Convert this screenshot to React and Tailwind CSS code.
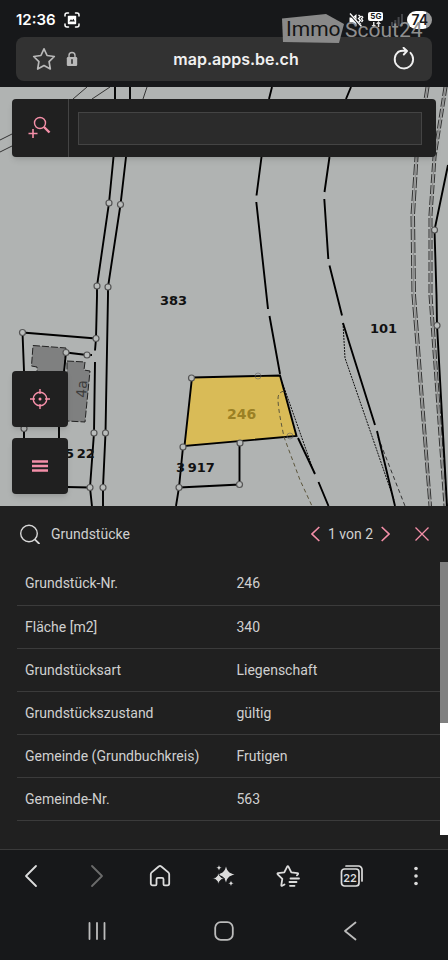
const rows = [
  ['Grundstück-Nr.', '246'],
  ['Fläche [m2]', '340'],
  ['Grundstücksart', 'Liegenschaft'],
  ['Grundstückszustand', 'gültig'],
  ['Gemeinde (Grundbuchkreis)', 'Frutigen'],
  ['Gemeinde-Nr.', '563'],
];

const boundaryPoints = [
  [109, 203], [120.5, 204.5], [97, 286], [108, 287], [22.5, 332.5], [96, 338.5],
  [66, 352.5], [87, 355], [24, 428.5], [94, 433], [105.5, 433], [90, 487.5],
  [103, 487.5], [179, 487.5], [239.5, 484.5], [434.5, 230], [437, 325.5],
  [183, 447], [240, 443], [191.5, 378],
];

function StatusBar() {
  return (
    <div className="flex h-9 items-center px-4 pt-1 text-white">
      <span className="text-[15px] font-semibold leading-5">12:36</span>
      <svg className="ml-2 size-4" viewBox="0 0 16 16" fill="none" stroke="#fff" strokeWidth="1.5" strokeLinecap="round">
        <path d="M1 4V3a2 2 0 0 1 2-2h1.5M11.500 1H13a2 2 0 0 1 2 2v1M15 12v1a2 2 0 0 1-2 2h-1.500M4.500 15H3a2 2 0 0 1-2-2v-1" />
        <path d="M4.500 3.800h7a.7.7 0 0 1 .7.7v7a.7.7 0 0 1-.7.7h-7a.7.7 0 0 1-.7-.7v-7a.7.7 0 0 1 .7-.7Z" fill="#fff" stroke="none" />
        <path d="M5.200 9.600 7 7.200l1.200 1.200 1.200-1.600 1.500 2.800z" fill="#17181a" stroke="none" />
      </svg>
      <div className="ml-auto flex items-center">
        <svg className="size-4" viewBox="0 0 16 16" fill="none" stroke="#fff" strokeWidth="1.300">
          <path d="M1.500 5.500h3l4-3.500v12l-4-3.500h-3z" fill="#fff" stroke="none" />
          <path d="m10.500 3 2 1.800-2 1.800 2 1.800-2 1.800 2 1.800-1.500 1.500M13.500 4l1.200 1.200-1.200 1.600 1.200 1.600-1.200 1.600" />
          <path d="M1.500 1.500 13 14.500" stroke="#17181a" strokeWidth="2.400" />
          <path d="M2 1.500 13.500 14.500" />
        </svg>
        <div className="ml-1 flex flex-col items-center">
          <span className="rounded-[2px] bg-white px-[2px] text-[8px] font-bold leading-[9px] text-[#17181a]">5G</span>
          <svg className="h-[7px] w-3" viewBox="0 0 12 7" fill="#ddd">
            <path d="M3 1h1.500v3H6L3.700 6.500 1.500 4H3zM8.500 0 11 3H9.300v3H7.800V3H6z" />
          </svg>
        </div>
        <svg className="ml-2 size-3" viewBox="0 0 12 12" fill="#45464a">
          <path d="M0 8h2v4H0zM3.300 6h2v6h-2zM6.600 3h2v9h-2zM10 0h2v12h-2z" />
        </svg>
        <span className="ml-1 rounded-full bg-linear-to-r from-white from-75% to-[#9a9a9a] to-75% px-1 text-[14px] font-semibold leading-[18px] text-[#17181a]">74</span>
      </div>
    </div>
  );
}

function Watermark() {
  return (
    <svg className="pointer-events-none absolute right-5 top-3 h-8 w-[148px]" viewBox="280 12 148 32" aria-hidden="true">
      <path d="m282 18.500 44-4.500 18 10-5 19-56-1z" fill="#8f8f8f" fillOpacity="0.950" />
      <text x="286" y="36" fontSize="21" fontFamily="Roboto, sans-serif" fill="#151515">Immo</text>
      <text x="345" y="37" fontSize="21" fontFamily="Roboto, sans-serif" fill="#8f8f8f">Scout24</text>
    </svg>
  );
}

function AddressBar() {
  return (
    <div className="mx-4 mt-px flex h-11 items-center rounded-lg bg-[#323232] px-4">
      <button aria-label="Lesezeichen">
        <svg className="size-6" viewBox="0 0 24 24" fill="none" stroke="#b9b9b9" strokeWidth="1.700" strokeLinejoin="round">
          <path d="m12 1.800 3.100 6.700 7.200 1-5.200 5.100 1.200 7.400-6.300-3.400L5.700 22l1.200-7.400L1.700 9.500l7.200-1z" />
        </svg>
      </button>
      <svg className="ml-2 h-4 w-4" viewBox="0 0 16 16">
        <path d="M5 8V4.500a3 3 0 0 1 6 0V8" fill="none" stroke="#b9b9b9" strokeWidth="1.400" />
        <rect x="2.800" y="6" width="10.400" height="9" rx="1.200" fill="#b9b9b9" />
        <path d="M8 8.800v3.500" stroke="#323232" strokeWidth="1.600" strokeLinecap="round" />
      </svg>
      <span className="flex-1 text-center text-[16px] font-semibold leading-6 text-[#f0f0f0]">map.apps.be.ch</span>
      <button aria-label="Neu laden">
        <svg className="size-6" viewBox="0 0 24 24" fill="none" stroke="#f0f0f0" strokeWidth="1.900" strokeLinecap="round" strokeLinejoin="round">
          <path d="M6.500 4.800A9.200 9.200 0 1 0 18.500 5.800" />
          <path d="M6.500 4.800c2-1.300 5-1.300 8-.8M11.500.8 15 4l-3.200 3.500" />
        </svg>
      </button>
    </div>
  );
}

function ParcelMap() {
  return (
    <svg className="block w-full" viewBox="0 87 448 419" fill="none" role="img" aria-label="Grundstückskarte">
      <rect y="87" width="448" height="419" fill="#b0b3b2" />
      <g fill="#7f8080" stroke="#222" strokeDasharray="7 2">
        <path d="m33 345.500 33 2.500-2 25H37v-6l-5.500-1z" />
        <path d="m67 361 18 1-1 8 6 1-5 51-18-1z" />
      </g>
      <g stroke="#333">
        <path d="M87 87 73 99M110 87 92 99M147 87l-4 12M0 140l12-6M0 152l12-6" />
        <path d="m280 376 35 99M343 323l2 35 49 142" stroke="#111" strokeDasharray="2 1" />
        <path d="m378 437 27 69" strokeDasharray="4 3" />
        <path d="M426 87 415 157l-4 58 1 80 17 211M429 87l-11 70-3.500 58 1 80 16 211" strokeDasharray="11 2" />
        <path d="M427.500 87l-11 70-3.700 58 1 80 16.500 211M445.500 87l-11 70-4 58v80l15 211" stroke="#888" />
        <path d="m444 87-11 70-4 58v80l15 211M447 87l-11 70-4 58v80l15 211" strokeDasharray="9 2" />
      </g>
      <g stroke="#000" strokeWidth="1.900">
        <path d="M115 87v12M113.500 157l-4.500 46-12 83v10l-1 42.500-1 12M95 362l-1 71-4 54.500 2 19" />
        <path d="M130 87v12M126 157l-5.500 47.500L108 287v8l-2.500 138-2.500 54.500V506" />
        <path d="m22.500 332.500 73.500 6M22.500 332.500 24 371v70M59 425v15M66 352.500 64 372M66 352.500l21 2.500h5M66 487l24 .5" />
        <path d="m272 87-3 12M261.500 157l-5 38.500M256.300 202 268 309M269.500 316l10.500 58M298 438l17 36M318.500 482l10 24" />
        <path d="m351 87-5 12M329.500 157l-5 35M324.300 199l4 60M329.500 265.500l12.500 50M343 323l32 102M377 431l18 75" />
        <path d="m448 165-13.500 65 2 65 .5 30 10 181" />
        <path d="m183 447-4 40.500-3 18.500M179 487.500l60.500-3V443" />
      </g>
      <path d="m192 377.500 88-2 16.500 60.500-112 10z" fill="#d9bb57" stroke="#000" strokeWidth="1.900" />
      <path d="M284 391c-4 1-6 3-6 8 0 10 4 28 6 38l16 43 12 26" stroke="#5c563c" strokeDasharray="4 3" />
      <g stroke="#666" strokeOpacity="0.600">
        <circle cx="258" cy="376" r="3" />
        <circle cx="290" cy="436" r="3" />
      </g>
      <g fill="#b9bcbb" stroke="#555" strokeWidth="1.200">
        {boundaryPoints.map(([x, y]) => (
          <circle key={`${x}-${y}`} cx={x} cy={y} r="3" />
        ))}
      </g>
      <g fill="#111" fontFamily="'DejaVu Sans', sans-serif" fontSize="13" fontWeight="700">
        <text x="160" y="305">383</text>
        <text x="370" y="333">101</text>
        <text x="65" y="458">5{'\u2009'}22</text>
        <text x="176" y="472">3{'\u2009'}917</text>
        <text x="227" y="419" fontSize="14" fill="#9b8024">246</text>
      </g>
      <text transform="translate(86 398) rotate(-86)" fontFamily="'DejaVu Sans', sans-serif" fontSize="14" fill="#3d3d3d">4a</text>
    </svg>
  );
}

function MapControls() {
  return (
    <div className="absolute inset-0 flex flex-col p-3">
      <div className="flex h-[58px] rounded-sm bg-[#202020] shadow-md">
        <button aria-label="Suche erweitern" className="flex w-14 items-center justify-center">
          <svg className="size-6" viewBox="0 0 24 24" fill="none" stroke="#f48fa8">
            <circle cx="12" cy="7" r="5.500" strokeWidth="1.400" />
            <path d="m16 11 5.500 5.500" strokeWidth="2.400" />
            <path d="M5 13v9M.5 17.500h9" strokeWidth="1.600" />
          </svg>
        </button>
        <div className="flex flex-1 items-center border-l border-[#444] pl-[9px] pr-[14px]">
          <input aria-label="Suche" className="h-[33px] w-full border border-[#444] bg-[#2b2b2b] px-2 text-sm text-[#d0d0d0] outline-none" />
        </div>
      </div>
      <div className="mt-auto flex flex-col gap-[11px]">
        <button aria-label="Standort" className="flex size-14 items-center justify-center rounded-sm bg-[#202020] shadow-md">
          <svg className="size-5" viewBox="0 0 20 20" fill="none" stroke="#f48fa8" strokeWidth="1.400">
            <circle cx="10" cy="10" r="6.800" />
            <circle cx="10" cy="10" r="1.500" fill="#f48fa8" stroke="none" />
            <path d="M10 0v5M10 15v5M0 10h5M15 10h5" />
          </svg>
        </button>
        <button aria-label="Menü" className="flex size-14 items-center justify-center rounded-sm bg-[#202020] shadow-md">
          <svg className="h-3 w-4" viewBox="0 0 16 12" stroke="#f48fa8" strokeWidth="2.400">
            <path d="M0 1.500h16M0 6h16M0 10.500h16" />
          </svg>
        </button>
      </div>
    </div>
  );
}

function ParcelPanel() {
  return (
    <section className="bg-[#202020] text-[14px] text-[#d0d0d0] [font-family:Roboto,sans-serif]">
      <header className="flex h-14 items-center pl-5 pr-[18px]">
        <svg className="size-5" viewBox="0 0 20 20" fill="none" stroke="#d8d8d8" strokeWidth="1.400">
          <circle cx="9" cy="9.500" r="8.300" />
          <path d="m14.800 15.300 4.700 4.700" strokeWidth="1.800" />
        </svg>
        <h1 className="ml-[11px] leading-5">Grundstücke</h1>
        <div className="ml-auto flex items-center gap-2">
          <button aria-label="Zurück">
            <svg className="h-4 w-[9px]" viewBox="0 0 9 16" fill="none" stroke="#f48fa8" strokeWidth="1.600">
              <path d="M8.300 1 1 8l7.300 7" />
            </svg>
          </button>
          <span className="leading-5">1 von 2</span>
          <button aria-label="Weiter">
            <svg className="h-4 w-[9px]" viewBox="0 0 9 16" fill="none" stroke="#f48fa8" strokeWidth="1.600">
              <path d="M.7 1 8 8l-7.300 7" />
            </svg>
          </button>
        </div>
        <button aria-label="Schliessen" className="ml-6">
          <svg className="size-4" viewBox="0 0 16 16" stroke="#f48fa8" strokeWidth="1.300">
            <path d="m1.500 1.500 13 13M14.500 1.500l-13 13" />
          </svg>
        </button>
      </header>
      <div className="flex pb-[14px]">
        <div className="flex-1 pb-[14px] pl-[17px]">
          <table className="w-full table-fixed">
            <tbody>
              {rows.map(([label, value]) => (
                <tr key={label} className="h-[43px] border-b border-[#3b3b3b]">
                  <th scope="row" className="w-1/2 pl-2 text-left font-normal leading-5">{label}</th>
                  <td className="pl-2 leading-5">{value}</td>
                </tr>
              ))}
            </tbody>
          </table>
        </div>
        <div className="flex w-2 flex-col bg-white">
          <div className="h-[161px] bg-[#808080]" />
        </div>
      </div>
    </section>
  );
}

const toolButton = 'flex flex-1 items-center justify-center';

function BrowserToolbar() {
  return (
    <nav className="flex h-[54px] border-t border-[#3a3a3a] text-[#dcdcdc]">
      <button aria-label="Zurück" className={toolButton}>
        <svg className="size-6" viewBox="0 0 24 24" fill="none" stroke="currentColor" strokeWidth="1.800" strokeLinecap="round" strokeLinejoin="round">
          <path d="M16 2 6 12l10 10" />
        </svg>
      </button>
      <button aria-label="Vorwärts" className={toolButton}>
        <svg className="size-6" viewBox="0 0 24 24" fill="none" stroke="#6b6b6b" strokeWidth="1.800" strokeLinecap="round" strokeLinejoin="round">
          <path d="m8 2 10 10L8 22" />
        </svg>
      </button>
      <button aria-label="Startseite" className={toolButton}>
        <svg className="size-6" viewBox="0 0 24 24" fill="none" stroke="currentColor" strokeWidth="1.800" strokeLinejoin="round">
          <path d="M2.800 10.200c0-.7.3-1.300.9-1.800l7-5.900a1.900 1.900 0 0 1 2.600 0l7 5.900c.6.500.9 1.100.9 1.800v9.300c0 1.100-.8 1.900-1.900 1.900h-2.600c-.7 0-1.200-.5-1.200-1.200v-5c0-.9-.5-1.400-1.400-1.400H9.900c-.9 0-1.400.5-1.400 1.400v5c0 .7-.5 1.200-1.200 1.200H4.700c-1.100 0-1.900-.8-1.900-1.900z" />
        </svg>
      </button>
      <button aria-label="Assistent" className={toolButton}>
        <svg className="size-6" viewBox="0 0 24 24" fill="currentColor">
          <path d="M14 2.500c1.400 5 3 6.500 8.500 8-5.500 1.500-7.100 3-8.500 8-1.400-5-3-6.500-8.500-8 5.500-1.500 7.100-3 8.500-8Z" />
          <path d="M6.500 8.500c.9 3.800 2.100 5 6 6-3.900 1-5.100 2.200-6 6-.9-3.800-2.100-5-6-6 3.900-1 5.100-2.200 6-6Z" stroke="#17181a" strokeWidth=".8" />
          <path d="M7 1c.3 1.800 1 2.500 2.800 2.800C8 4.100 7.300 4.800 7 6.600 6.700 4.800 6 4.100 4.200 3.800 6 3.500 6.700 2.800 7 1ZM19 16.500c.3 1.800 1 2.500 2.800 2.800-1.800.3-2.500 1-2.800 2.800-.3-1.800-1-2.500-2.800-2.800 1.800-.3 2.500-1 2.800-2.800Z" />
        </svg>
      </button>
      <button aria-label="Lesezeichenliste" className={toolButton}>
        <svg className="size-6" viewBox="0 0 24 24" fill="none" stroke="currentColor" strokeWidth="1.800" strokeLinecap="round" strokeLinejoin="round">
          <path d="M8.500 20.500 6.200 21.800c-.6.300-1-.1-.9-.7l1-6.200-4.600-4.600c-.5-.5-.3-1 .4-1.100l6.200-.9 2.900-5.700c.3-.6.9-.6 1.200 0l2.900 5.700 6.200.9c.7.100.9.600.4 1.100l-1 1" />
          <path d="M14.500 14.500h8.500M13.500 18h7M14 21.800h4.500" />
        </svg>
      </button>
      <button aria-label="Tabs" className={toolButton}>
        <span className="relative flex size-6 items-end">
          <svg className="absolute inset-0 size-6" viewBox="0 0 24 24" fill="none" stroke="currentColor" strokeWidth="1.700" strokeLinecap="round">
            <rect x="1.500" y="5" width="17.500" height="17" rx="3" />
            <path d="M6 2h12.500A3.500 3.500 0 0 1 22 5.500V17" />
          </svg>
          <span className="w-5 pb-1 text-center text-[11px] font-semibold leading-3">22</span>
        </span>
      </button>
      <button aria-label="Mehr" className={toolButton}>
        <svg className="size-6" viewBox="0 0 24 24" fill="currentColor">
          <circle cx="12" cy="4.500" r="1.800" />
          <circle cx="12" cy="12" r="1.800" />
          <circle cx="12" cy="19.500" r="1.800" />
        </svg>
      </button>
    </nav>
  );
}

function SystemNav() {
  return (
    <nav className="flex h-[57px] px-[34px] text-[#bcbcbc]">
      <button aria-label="Letzte Apps" className={toolButton}>
        <svg className="size-5" viewBox="0 0 20 20" stroke="currentColor" strokeWidth="1.800" strokeLinecap="round">
          <path d="M2.500 2v16M10 2v16M17.500 2v16" />
        </svg>
      </button>
      <button aria-label="Home" className={toolButton}>
        <svg className="size-5" viewBox="0 0 20 20" fill="none" stroke="currentColor" strokeWidth="1.800">
          <rect x="1.200" y="1.200" width="17.600" height="17.600" rx="5.500" />
        </svg>
      </button>
      <button aria-label="Zurück" className={toolButton}>
        <svg className="size-5" viewBox="0 0 20 20" fill="none" stroke="currentColor" strokeWidth="1.800" strokeLinecap="round" strokeLinejoin="round">
          <path d="M14.500 1.500 4 10l10.500 8.500" />
        </svg>
      </button>
    </nav>
  );
}

export default function App() {
  return (
    <div className="min-h-screen bg-[#17181a] [font-family:Inter,sans-serif]">
      <header className="relative pb-[6px]">
        <StatusBar />
        <AddressBar />
        <Watermark />
      </header>
      <main>
        <div className="relative">
          <ParcelMap />
          <MapControls />
        </div>
        <ParcelPanel />
      </main>
      <BrowserToolbar />
      <SystemNav />
    </div>
  );
}
